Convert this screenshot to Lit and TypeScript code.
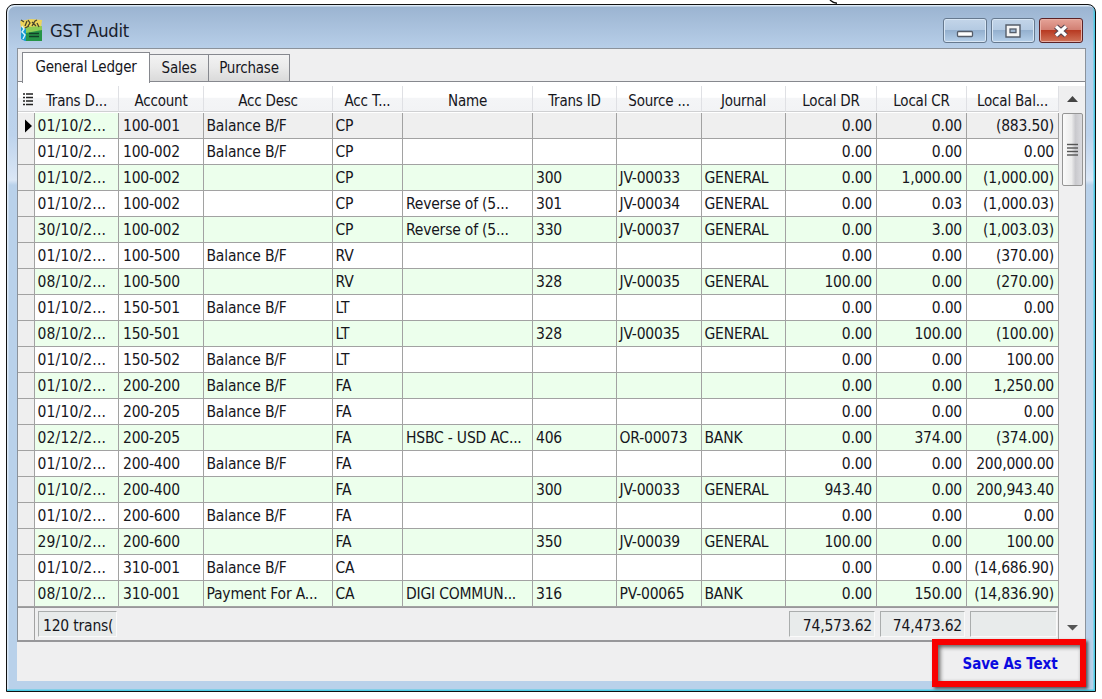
import { LitElement, html, css, svg } from "lit";
import { customElement } from "lit/decorators.js";

const HEAD = ["Trans D...", "Account", "Acc Desc", "Acc T...", "Name", "Trans ID", "Source ...", "Journal", "Local DR", "Local CR", "Local Bal..."];

const ROWS = `01/10/2...|100-001|Balance B/F|CP|||||0.00|0.00|(883.50)
01/10/2...|100-002|Balance B/F|CP|||||0.00|0.00|0.00
01/10/2...|100-002||CP||300|JV-00033|GENERAL|0.00|1,000.00|(1,000.00)
01/10/2...|100-002||CP|Reverse of (5...|301|JV-00034|GENERAL|0.00|0.03|(1,000.03)
30/10/2...|100-002||CP|Reverse of (5...|330|JV-00037|GENERAL|0.00|3.00|(1,003.03)
01/10/2...|100-500|Balance B/F|RV|||||0.00|0.00|(370.00)
08/10/2...|100-500||RV||328|JV-00035|GENERAL|100.00|0.00|(270.00)
01/10/2...|150-501|Balance B/F|LT|||||0.00|0.00|0.00
08/10/2...|150-501||LT||328|JV-00035|GENERAL|0.00|100.00|(100.00)
01/10/2...|150-502|Balance B/F|LT|||||0.00|0.00|100.00
01/10/2...|200-200|Balance B/F|FA|||||0.00|0.00|1,250.00
01/10/2...|200-205|Balance B/F|FA|||||0.00|0.00|0.00
02/12/2...|200-205||FA|HSBC - USD AC...|406|OR-00073|BANK|0.00|374.00|(374.00)
01/10/2...|200-400|Balance B/F|FA|||||0.00|0.00|200,000.00
01/10/2...|200-400||FA||300|JV-00033|GENERAL|943.40|0.00|200,943.40
01/10/2...|200-600|Balance B/F|FA|||||0.00|0.00|0.00
29/10/2...|200-600||FA||350|JV-00039|GENERAL|100.00|0.00|100.00
01/10/2...|310-001|Balance B/F|CA|||||0.00|0.00|(14,686.90)
08/10/2...|310-001|Payment For A...|CA|DIGI COMMUN...|316|PV-00065|BANK|0.00|150.00|(14,836.90)`
  .split("\n")
  .map((line) => line.split("|"));

@customElement("app-root")
export class AppRoot extends LitElement {
  static styles = css`
    :host {
      display: block;
      position: relative;
      width: 1102px;
      height: 699px;
      background: #fff;
      overflow: hidden;
      box-sizing: border-box;
      padding: 4px 0 0 6px;
      font: 15.5px "DejaVu Sans Condensed", "DejaVu Sans", sans-serif;
      font-stretch: condensed;
      letter-spacing: -0.2px;
      color: #16161c;
    }
    * { box-sizing: border-box; }
    .tail { position: absolute; left: 829px; top: 0; }
    .window {
      width: 1090px;
      height: 688px;
      display: flex;
      flex-direction: column;
      border: 1.5px solid #111;
      border-radius: 8px 8px 0 0;
      background: linear-gradient(#9ab3d0, #b8cfe9 44px, #bdd3ec 130px, #dbe7f6 175px, #b9d1ea 180px, #b9d1ea);
      box-shadow: inset -1.5px -1.5px 0 #4ccbe4, inset 1.5px 1.5px 0 #dce9f6;
      padding: 0 9px 10px 10px;
    }
    .title { height: 43px; flex: none; display: flex; align-items: flex-start; padding: 13px 3px 0 3px; }
    .title h1 { margin: 1px 0 0 7px; font-size: 18.2px; font-weight: 400; line-height: 24px; letter-spacing: -0.25px; flex: 1; color: #18202c; }
    .controls { display: flex; gap: 4px; }
    .ctl {
      width: 44px; height: 25px; border: 1.5px solid #66798f; border-radius: 3px;
      background: linear-gradient(#c3d5e9, #b4cae2 48%, #94b0cf 50%, #b5cfe9);
      box-shadow: inset 0 0 0 1px #d8e6f4;
      display: grid; place-items: center;
    }
    .close { border-color: #5c2226; background: linear-gradient(#e5a398, #d17f72 48%, #b83a22 50%, #d0745a); box-shadow: inset 0 0 0 1px #e8b0a5; }
    .client { flex: 1; display: flex; flex-direction: column; background: #efeff0; border-top: 1.5px solid #8b929b; border-right: 1px solid #8b929b; min-height: 0; }
    .tabs { height: 33px; flex: none; display: flex; align-items: flex-end; padding-left: 4px; border-bottom: 1.5px solid #86888e; border-left: 1px solid #8b929b; }
    .tab { height: 27px; border: 1.5px solid #86888e; border-bottom: 0; border-left-width: 0; background: linear-gradient(#f3f3f3, #e9e9e9 50%, #dadada); text-align: center; line-height: 27px; font-size: 15px; }
    .t1 { width: 128px; height: 31px; margin-bottom: -2px; border-left-width: 1.5px; background: #fff; line-height: 28px; position: relative; }
    .t2 { width: 59px; }
    .t3 { width: 81px; }
    .body { height: 560px; flex: none; display: flex; background: #fff; border-left: 1px solid #8b929b; border-bottom: 2px solid #97979a; }
    .grid { width: 1041px; flex: none; }
    .row {
      display: grid; height: 26px;
      grid-template-columns: 17px 84px 85px 129px 70px 130px 84px 85px 84px 91px 90px 92px;
    }
    .cell {
      border-right: 1.5px solid #a2a2a2; border-bottom: 1.5px solid #a2a2a2;
      line-height: 26px; white-space: pre; overflow: hidden; padding: 0 2.5px;
    }
    .cell:nth-child(2) { letter-spacing: 0.15px; }
    .cell:nth-child(3) { padding-left: 4px; }
    .cell:nth-child(6), .cell:nth-child(7) { padding-left: 3px; }
    .num { text-align: right; padding-right: 4px; }
    .cell:nth-child(12) { padding-right: 4px; }
    .mark { background: #efefef; padding: 0; display: grid; place-items: center; }
    .green .cell:not(.mark) { background: #ecffec; }
    .selected .cell:not(.mark):not(:nth-child(2)) { background: #efefef; }
    .head { height: 31px; padding-top: 4px; }
    .head div {
      height: 26px; border-right: 1px solid #dfe0e4; border-bottom: 1.5px solid #cfd0d2; text-align: center; line-height: 30px;
      white-space: pre; overflow: hidden; background: linear-gradient(#fff 45%, #f4f5f7 50%, #f2f3f5);
      font-size: 15px;
    }
    .head .icon { display: grid; place-items: center; padding: 3px 0 0 3px; border-right-color: transparent; }
    .foot { height: 33px; border-top: 1.5px solid #98989a; background: #efeff0; border-right: 1px solid #a2a2a2; }
    .foot div:first-child { border-right: 1px solid #a2a2a2; }
    .box {
      height: 26px; margin: 3px 2px 0 3px; background: #e8ebeb; border: 1px solid; border-color: #aaadad #fafafa #fafafa #aaadad;
      line-height: 28px; padding: 0 4px; white-space: pre; overflow: hidden;
    }
    .foot .num { padding-right: 2px; }
    .scroll { flex: 1; margin-top: 4px; background: #efeff0; display: flex; flex-direction: column; align-items: center; }
    .up { height: 27px; padding-top: 10px; }
    .thumb {
      width: 21px; height: 73px; border: 1.5px solid #959595; border-radius: 2px;
      background: linear-gradient(90deg, #fafafa, #ececec 45%, #c9c9cd 65%, #dadade); display: grid; place-items: center;
    }
    .down { margin-top: auto; height: 15px; }
    svg { display: block; }
    .save {
      position: absolute; left: 932px; top: 639px; width: 154px; height: 48px; border: 6px solid #f80000; background: #efeff0;
      box-shadow: 2px 2px 3px #333c, inset 2px 2px 4px #222b; color: #0a0ae0; font-weight: 700; font-size: 15px; letter-spacing: -0.1px;
      line-height: 38px; text-align: center; padding-left: 2px; white-space: nowrap;
    }
  `;

  private row(cells: string[], index: number) {
    return html`<div class="row ${index % 2 ? "" : "green"} ${index ? "" : "selected"}">
      <div class="cell mark">${index ? "" : html`<svg width="17" height="14"><path d="M7 0.5L14 7L7 13.5Z" fill="#000"/></svg>`}</div>
      ${cells.map((text, i) => html`<div class="cell ${i > 7 ? "num" : ""}">${text}</div>`)}
    </div>`;
  }

  render() {
    return html`
      <svg class="tail" width="12" height="4"><path d="M1 0Q4 3 8 3.2" fill="none" stroke="#111" stroke-width="1.4"/></svg>
      <div class="window">
        <div class="title">
          <svg width="23" height="24" viewBox="0 0 23 24">
            <path d="M1 8H21V23H5L1 21Z" fill="#159bd0"/>
            <path d="M0 3L11 1L22 2L21 10L10 12L1 9Z" fill="#edd45a"/>
            <path d="M6 10L22 9V23H6Z" fill="#269447"/><path d="M6 9L22 8V12L6 15Z" fill="#8dcc55"/>
            <path d="M1 2L4 4M7 3L5 8M8 2L10 5L8 8M12 8L15 3L17 2M12 4L16 8M17 5L19 9M5 10L9 8" stroke="#46452b" stroke-width="1.3" fill="none"/>
            <path d="M9 15.5H19M9 18.5H19" stroke="#123f28" stroke-width="1.4"/>
            <path d="M2 8L4 11L2 14L5 17L3 21" stroke="#d8f2f8" stroke-width="1.4" fill="none"/>
          </svg>
          <h1>GST Audit</h1>
          <div class="controls">
            <div class="ctl"><svg width="18" height="16"><rect x="1.5" y="8.5" width="15" height="5" rx="1" fill="#fff" stroke="#555d6a" stroke-width="1.3"/></svg></div>
            <div class="ctl"><svg width="16" height="14"><path d="M1 1H15V13H1Z" fill="#f5f5f5" stroke="#555d6a" stroke-width="1.4"/><rect x="5" y="5" width="6" height="3.6" fill="#9fb7d0" stroke="#555d6a" stroke-width="1.3"/></svg></div>
            <div class="ctl close"><svg width="18" height="14"><path d="M4 2.5L14 11.5M14 2.5L4 11.5" stroke="#574650" stroke-width="5.6"/><path d="M4 2.5L14 11.5M14 2.5L4 11.5" stroke="#fff" stroke-width="3.2"/></svg></div>
          </div>
        </div>
        <div class="client">
          <div class="tabs">
            <div class="tab t1">General Ledger</div><div class="tab t2">Sales</div><div class="tab t3">Purchase</div>
          </div>
          <div class="body">
            <div class="grid">
              <div class="row head">
                <div class="icon"><svg width="10" height="14">${[1, 4.5, 8, 11.5].map((y) => svg`<path d="M0 ${y}H2M3 ${y}H10" stroke="#222" stroke-width="1.3"/>`)}</svg></div>
                ${HEAD.map((text) => html`<div>${text}</div>`)}
              </div>
              ${ROWS.map((cells, i) => this.row(cells, i))}
              <div class="row foot">
                <div></div><div class="box">120 trans(</div>
                <span></span><span></span><span></span><span></span><span></span><span></span><span></span>
                <div class="box num">74,573.62</div><div class="box num">74,473.62</div><div class="box"></div>
              </div>
            </div>
            <div class="scroll">
              <div class="up"><svg width="11" height="6"><path d="M0 6L5.5 0L11 6Z" fill="#444"/></svg></div>
              <div class="thumb"><svg width="11" height="14">${[1.5, 5, 8.5, 12].map((y) => svg`<path d="M0 ${y}H11" stroke="#555" stroke-width="1.4"/>`)}</svg></div>
              <div class="down"><svg width="11" height="6"><path d="M0 0L5.5 5.5L11 0Z" fill="#555"/></svg></div>
            </div>
          </div>
        </div>
      </div>
      <div class="save">Save As Text</div>
    `;
  }
}
